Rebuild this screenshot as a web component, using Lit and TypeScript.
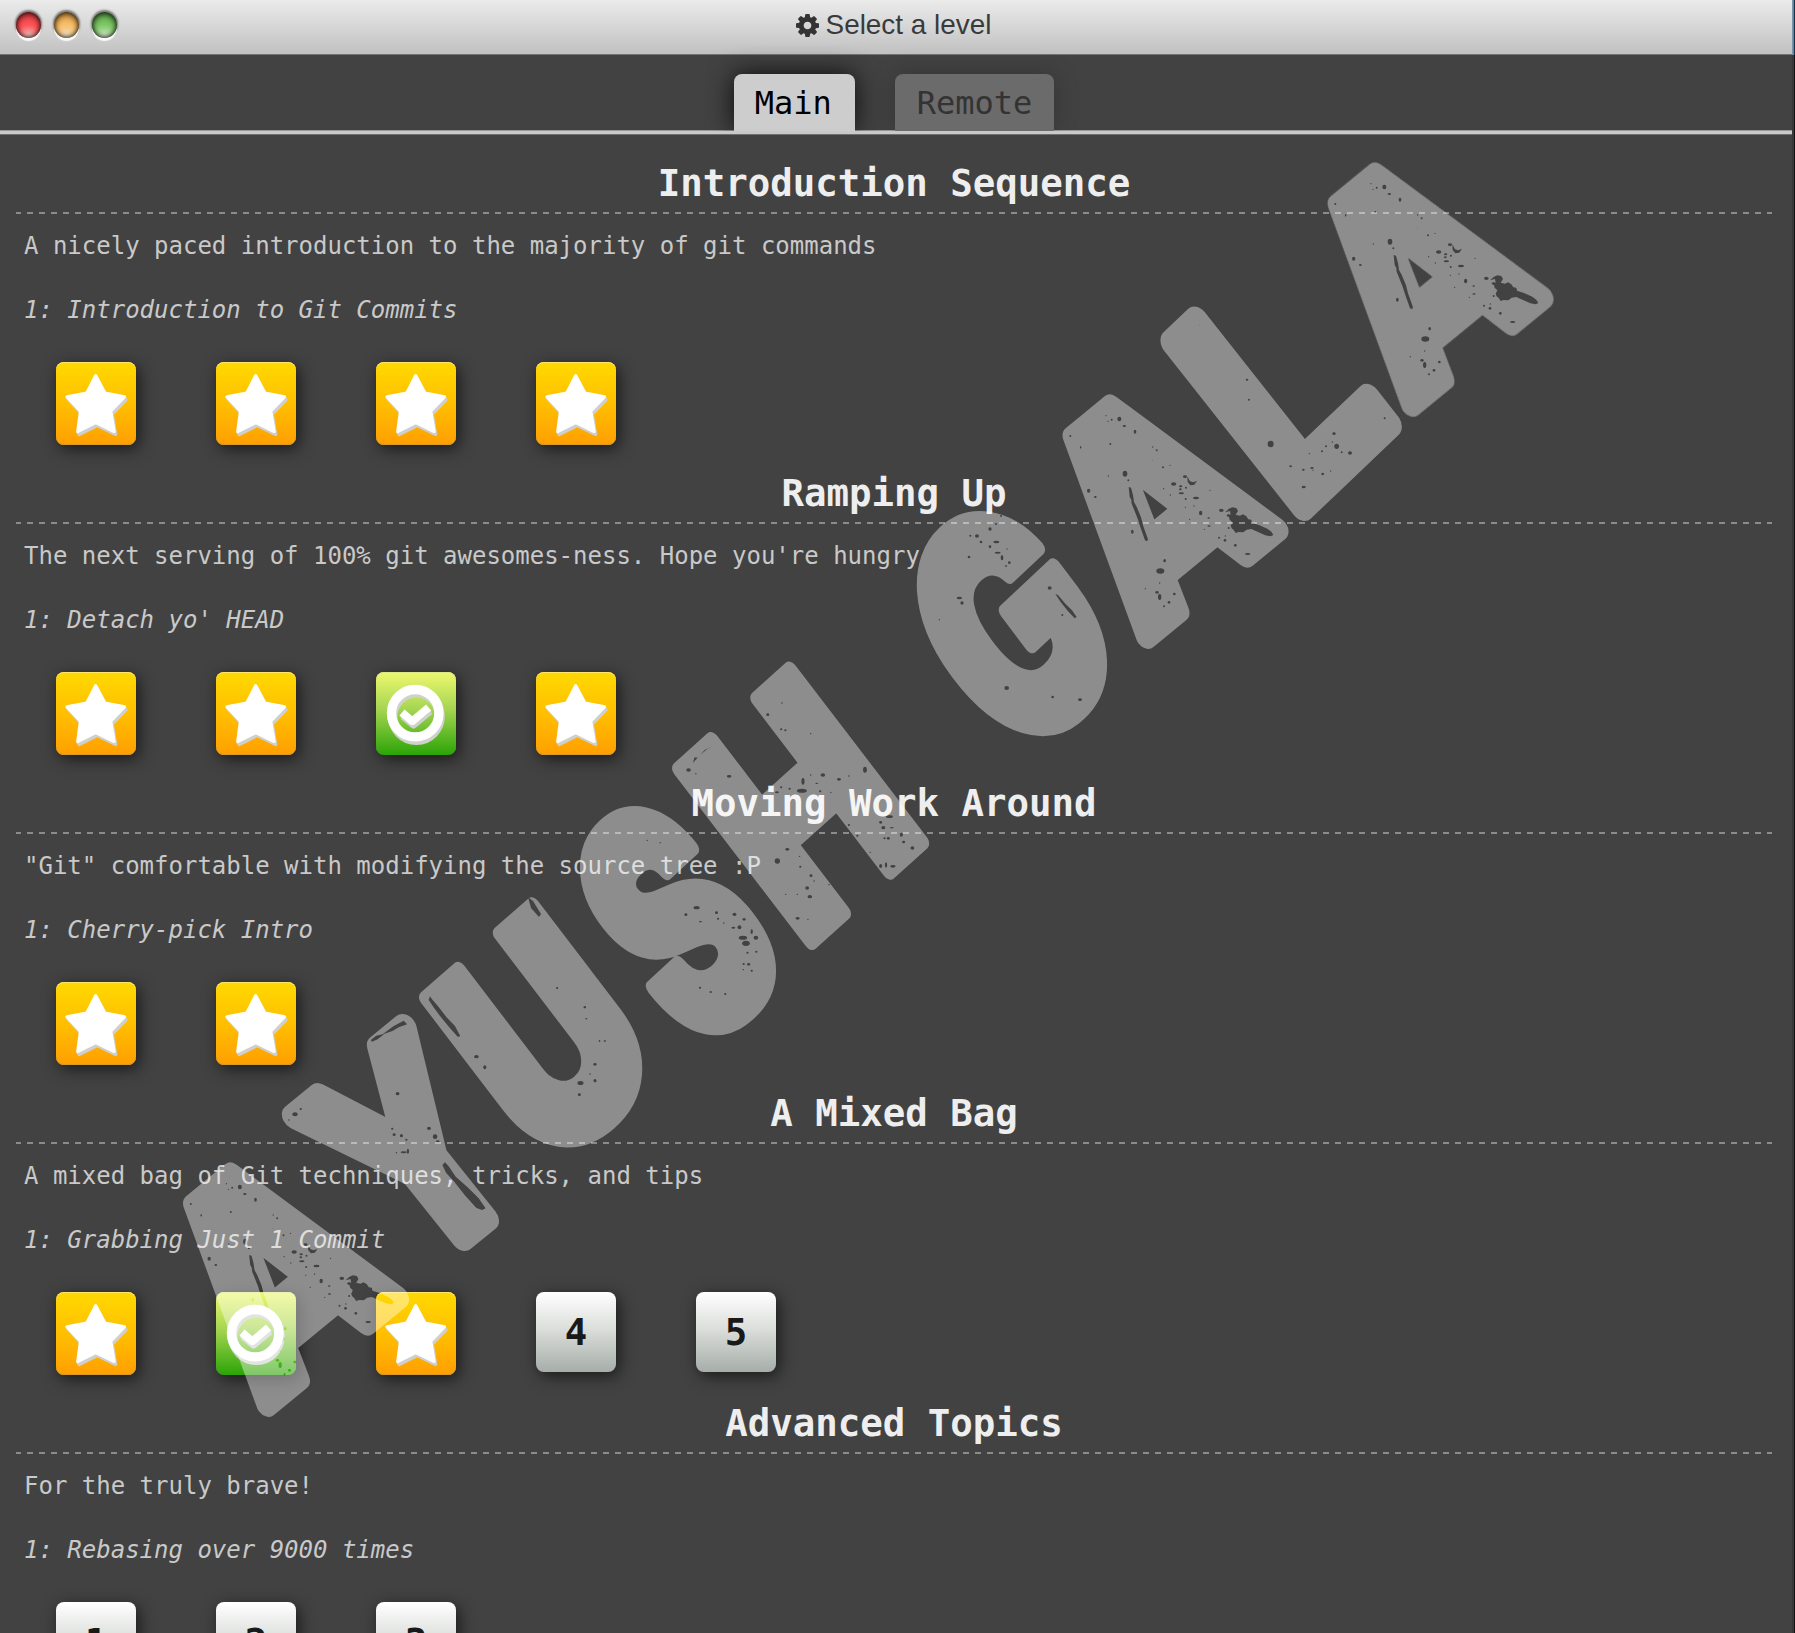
import { LitElement, html, svg, css } from "lit";
import { customElement, property } from "lit/decorators.js";

type Kind = "star" | "check" | "number";

interface Sequence {
  title: string;
  about: string;
  first: string;
  levels: Kind[];
}

const SEQUENCES: Sequence[] = [
  {
    title: "Introduction Sequence",
    about: "A nicely paced introduction to the majority of git commands",
    first: "1: Introduction to Git Commits",
    levels: ["star", "star", "star", "star"],
  },
  {
    title: "Ramping Up",
    about: "The next serving of 100% git awesomes-ness. Hope you're hungry",
    first: "1: Detach yo' HEAD",
    levels: ["star", "star", "check", "star"],
  },
  {
    title: "Moving Work Around",
    about: '"Git" comfortable with modifying the source tree :P',
    first: "1: Cherry-pick Intro",
    levels: ["star", "star"],
  },
  {
    title: "A Mixed Bag",
    about: "A mixed bag of Git techniques, tricks, and tips",
    first: "1: Grabbing Just 1 Commit",
    levels: ["star", "check", "star", "number", "number"],
  },
  {
    title: "Advanced Topics",
    about: "For the truly brave!",
    first: "1: Rebasing over 9000 times",
    levels: ["number", "number", "number"],
  },
];

@customElement("level-tile")
class LevelTile extends LitElement {
  @property() kind: Kind = "number";
  @property({ type: Number }) index = 1;

  static styles = css`
    :host { display: block; width: 80px; flex: none; }
    .tile {
      box-sizing: border-box;
      width: 80px;
      height: 83px;
      border-radius: 8px;
      box-shadow: 3px 4px 16px rgba(0, 0, 0, 0.62);
      overflow: hidden;
    }
    .star {
      background: linear-gradient(#ffd900, #ffbf00 50%, #ff9f00);
      box-shadow: inset 0 1px 0 #ffe566, inset 0 -1px 0 #d99a2a, 3px 4px 16px rgba(0, 0, 0, 0.62);
    }
    .check {
      background: linear-gradient(#eef86e, #a5d552 45%, #2ba406);
      box-shadow: inset 0 1px 0 #d9e880, 3px 4px 16px rgba(0, 0, 0, 0.62);
    }
    .number {
      height: 80px;
      background: linear-gradient(#ffffff, #dcdfdc 45%, #a6aea9);
      color: #191919;
      font: bold 37.4px/44px "DejaVu Sans Mono", monospace;
      padding-top: 18px;
      text-align: center;
    }
    svg { display: block; }
  `;

  render() {
    if (this.kind === "star") {
      const points = "39.7,13.5 48.9,31 68.6,34.8 54.8,49.3 58.2,69.6 39.7,60.6 21.6,69.6 24.4,49.3 10.9,34.8 30.7,31";
      return html`<div class="tile star">
        <svg width="80" height="83" viewBox="0 0 80 83" stroke-width="3" stroke-linejoin="round">
          <polygon points=${points} transform="translate(1.6 3)" fill="#cfcfcf" stroke="#cfcfcf" />
          <polygon points=${points} transform="translate(.6 1.5)" fill="#cfcfcf" stroke="#cfcfcf" />
          <polygon points=${points} fill="#fff" stroke="#fff" />
        </svg>
      </div>`;
    }
    if (this.kind === "check") {
      const mark = (dx: number, dy: number, color: string) => svg`
        <g transform=${`translate(${dx} ${dy})`} fill="none" stroke=${color}>
          <circle cx="39.2" cy="41.2" r="23.7" stroke-width="9.4" />
          <path d="M26 40.5l10.3 8.7L52.6 35.5" stroke-width="7.8" stroke-linejoin="round" />
        </g>`;
      return html`<div class="tile check">
        <svg width="80" height="83" viewBox="0 0 80 83">
          ${mark(1.2, 3.4, "#cfd2cc")} ${mark(0.6, 1.6, "#cfd2cc")} ${mark(0, 0, "#fff")}
        </svg>
      </div>`;
    }
    return html`<div class="tile number">${this.index}</div>`;
  }
}

/* ---------- Stamp lettering laid over the window ---------- */

type Point = [number, number];

interface StampLetter {
  char: string;
  bottomLeft: Point;
  across: Point;
  up: Point;
  font: string;
  weight: number;
  stroke: number;
}

const letter = (font: string, weight: number, stroke: number) =>
  (char: string, bottomLeft: Point, across: Point, up: Point): StampLetter => ({
    char, bottomLeft, across, up, font, weight, stroke,
  });
const heavy = letter("Inter", 900, 14);
const plain = letter('"Liberation Sans"', 700, 24);
const wide = letter('"DejaVu Sans"', 700, 23);
const letterA = (dx: number, dy: number) => wide("A", [1410 + dx, 422 + dy], [150, -123], [-135, -182]);

const STAMP: StampLetter[] = [
  letterA(-1144.5, 1000),
  plain("Y", [419, 1291], [129, -105], [-145, -181]),
  heavy("U", [557, 1181], [119, -104], [-142, -186]),
  heavy("S", [704, 1068], [99, -92], [-158, -203]),
  heavy("H", [811, 953], [121, -109], [-143, -187]),
  heavy("G", [1026, 776], [114, -107], [-148, -196]),
  letterA(-265, 232),
  plain("L", [1302, 527], [107, -102], [-150, -190]),
  letterA(0, 0),
];

const FONT_SIZE = 260;

function placeLetter(l: StampLetter, ctx: CanvasRenderingContext2D) {
  ctx.font = `${l.weight} ${FONT_SIZE}px ${l.font}`;
  const m = ctx.measureText(l.char);
  const pad = l.stroke / 2;
  const left = -m.actualBoundingBoxLeft - pad;
  const right = m.actualBoundingBoxRight + pad;
  const top = m.actualBoundingBoxAscent + pad;
  const bottom = -m.actualBoundingBoxDescent - pad;
  const a = l.across[0] / (right - left);
  const b = l.across[1] / (right - left);
  const c = -l.up[0] / (top - bottom);
  const d = -l.up[1] / (top - bottom);
  const e = l.bottomLeft[0] - a * left + c * bottom;
  const f = l.bottomLeft[1] - b * left + d * bottom;
  return svg`<text transform=${`matrix(${a} ${b} ${c} ${d} ${e} ${f})`} font-family=${l.font}
    font-weight=${l.weight} stroke-width=${l.stroke}>${l.char}</text>`;
}

const specks = (list: number[][]) => list.map(([x, y, rx, ry]) => svg`<ellipse cx=${x} cy=${y} rx=${rx} ry=${ry ?? rx} />`);

const WEAR_A = [
  [703, 141, 6, 7], [680, 143, 3], [669, 148, 2], [663, 131, 2], [718, 162, 5, 3], [750, 179, 4, 6], [556, 192, 3],
  [587, 226, 2, 4], [676, 216, 3], [803, 225, 2], [815, 235, 3], [802, 265, 1], [720, 305, 7, 9], [670, 312, 2],
  [611, 356, 5, 6], [631, 375, 4, 3], [742, 479, 4, 6], [834, 286, 3], [866, 336, 8, 5], [900, 314, 6, 4],
  [889, 364, 8, 3], [902, 381, 3], [933, 378, 9, 4], [947, 423, 5, 7], [914, 442, 2], [927, 402, 2], [887, 343, 5, 3],
  [886, 352, 4, 3], [903, 347, 3], [836, 350, 2], [856, 369, 2], [901, 406, 2], [971, 438, 4, 2], [972, 462, 5, 2],
  [958, 472, 2], [1009, 415, 7, 5], [1031, 468, 3], [1002, 497, 3], [1020, 505, 4], [1021, 492, 2], [1051, 520, 4],
  [1088, 546, 8, 3], [839, 566, 4, 5], [826, 597, 12, 8], [824, 633, 2], [816, 661, 5, 4], [824, 675, 5, 9],
  [868, 666, 4], [852, 691, 4], [837, 703, 3], [781, 650, 2], [855, 280, 2], [975, 355, 2], [730, 325, 3],
];
const WEAR_L = [
  [148, 555, 1], [289, 668, 3], [291, 719, 4, 3], [297, 779, 3], [362, 912, 9, 10], [552, 881, 5, 4], [547, 906, 2],
  [528, 919, 3], [560, 919, 7, 8], [516, 934, 3], [575, 937, 3], [600, 939, 6, 5], [478, 941, 2], [422, 979, 4, 3],
  [460, 989, 4, 3], [486, 984, 5, 3], [489, 991, 2], [518, 1002, 4], [542, 993, 2], [461, 1041, 6, 4], [704, 835, 3],
];
const WEAR_G = [
  [303, 468, 3], [288, 492, 3], [270, 507, 5], [231, 528, 6, 5], [211, 527, 3], [243, 546, 4], [289, 546, 9, 4],
  [270, 560, 4], [207, 591, 4], [293, 578, 9, 3], [306, 593, 4, 8], [321, 567, 2], [328, 608, 4], [318, 618, 4, 2],
  [178, 714, 8, 4], [186, 729, 5], [118, 779, 2], [449, 684, 6, 5], [487, 765, 3], [320, 984, 7, 6], [458, 1011, 4],
  [540, 1019, 6, 4], [318, 688, 3],
];
const WEAR_HS = [
  [580, 189, 2], [543, 224, 4], [578, 268, 3], [589, 271, 3], [655, 281, 2], [336, 390, 6, 5], [355, 401, 2],
  [442, 409, 6, 4], [797, 389, 5, 9], [687, 405, 6, 5], [729, 418, 5, 4], [755, 408, 2], [635, 424, 4, 10],
  [632, 452, 13, 6], [655, 405, 2], [671, 430, 4, 2], [600, 446, 3], [578, 442, 3], [567, 457, 5, 3], [680, 454, 3],
  [708, 457, 2], [861, 530, 9, 4], [838, 547, 4], [845, 563, 5], [867, 563, 5, 2], [755, 555, 3], [777, 587, 3],
  [892, 584, 4, 6], [858, 595, 4], [848, 595, 3], [898, 606, 4], [921, 624, 5], [811, 637, 2], [838, 678, 4, 6],
  [852, 675, 3, 8], [870, 679, 7, 4], [594, 628, 5, 4], [568, 663, 7, 8], [626, 649, 2], [628, 680, 3], [656, 707, 4],
  [664, 723, 2], [646, 744, 5], [653, 770, 6, 5], [620, 763, 2], [590, 763, 2], [621, 835, 5, 4], [648, 838, 2],
  [703, 734, 2], [228, 601, 2], [262, 608, 2], [357, 803, 8, 5], [329, 824, 4], [367, 845, 4, 2], [409, 818, 4],
  [413, 836, 3], [456, 823, 5], [481, 838, 4], [428, 849, 2], [453, 863, 5, 3], [469, 862, 5, 6], [478, 893, 11, 6],
  [486, 910, 10, 8], [501, 875, 3, 7], [512, 893, 6], [490, 938, 3], [513, 935, 3], [480, 972, 3], [493, 973, 4],
  [479, 989, 2], [501, 992, 3], [366, 1043, 3], [394, 1056, 3], [432, 1062, 3], [65, 1102, 3], [69, 1136, 2],
  [103, 1203, 2], [118, 1203, 2], [91, 1273, 3],
];
const WEAR_YU = [
  [379, 403, 7, 6], [394, 387, 3], [363, 420, 2], [647, 341, 5], [633, 446, 3], [638, 464, 4], [657, 467, 4, 5],
  [670, 479, 3], [729, 445, 5], [745, 470, 6, 7], [752, 484, 5, 3], [663, 517, 8, 3], [674, 514, 3, 8], [644, 518, 2],
  [853, 230, 6, 5], [875, 262, 4, 6], [1064, 24, 3], [1136, 82, 3], [1140, 116, 2], [1175, 183, 2], [1188, 183, 2],
  [1163, 253, 4], [1150, 282, 2], [1163, 302, 4, 5], [1125, 309, 8, 6], [1122, 344, 4],
];

const scarA = svg`
  ${specks(WEAR_A)}
  <path d="M731 345l7 2 6 22 3 21 8 14 13 32 6 24 15 42-3 6-6-3-14-40-8-25-8-20-10-25-1-11-5-10z" />
  <path d="M1020 421l12-11 10-4 12 2 5 9-7 11 13 3 9-4 10 6 6 9 9 1 2 9 21 7 25 11 12 9 6 10-8 4-16-3-22-10-20-9-14 2-10 8-14-1-9 3-6-9-6-5-3-8 5-10-8-8-2-8-8-3 5-6 8 2-2-11z" />
  <path d="M907 313l8 15 10 3 11-5-8 12-12 2-8-10z" />`;

@customElement("stamp-overlay")
class StampOverlay extends LitElement {
  static styles = css`
    :host { display: block; }
    svg { display: block; }
    .letters { fill: #fff; stroke: #fff; stroke-linejoin: round; font-size: 260px; }
  `;

  render() {
    const ctx = document.createElement("canvas").getContext("2d")!;
    return html`<svg width="1795" height="1633" viewBox="0 0 1795 1633">
      <defs>
        <mask id="wear" maskUnits="userSpaceOnUse" x="0" y="0" width="1795" height="1633">
          <rect width="1795" height="1633" fill="#fff" />
          <g transform="translate(1150 140) scale(.33333)">${scarA}${specks(WEAR_L)}</g>
          <g transform="translate(885 372) scale(.33333)">${scarA}</g>
          <g transform="translate(5.5 1140) scale(.33333)">${scarA}</g>
          <g transform="translate(900 360) scale(.33333)">
            ${specks(WEAR_G)}
            <path d="M466 702l8 3 22 26 20 20 14 20-6 4-20-21-22-28z" />
          </g>
          <g transform="translate(560 640) scale(.38265 .33333)">
            ${specks(WEAR_HS)}
            <path d="M402 317l-18 11-17 16-20 25 5-17 8 1 18-23z" />
          </g>
          <g transform="translate(150 980) scale(.38265 .33333)">
            ${specks(WEAR_YU)}
            <path d="M732 49l5 9 18 24 20 30 22 26 14 31-7 1-22-28-24-34-16-25-14-24z" />
            <path d="M577 180l14-13 17-4 28-24 27-17 9 11-22 9-15 10-22 9-18 17-15 7z" />
            <path d="M771 547l9 11 19 32 31 32 29 33 18 30-9 5-15-6-29-37-30-43-20-25-10-24z" />
          </g>
          <path d="M528 897l5 4 8 13-2 3-8-9z" />
        </mask>
      </defs>
      <g opacity=".4" mask="url(#wear)">
        <g class="letters">${STAMP.map((l) => placeLetter(l, ctx))}</g>
      </g>
    </svg>`;
  }
}

@customElement("app-root")
class AppRoot extends LitElement {
  static styles = css`
    :host {
      display: block;
      position: relative;
      width: 1795px;
      height: 1633px;
      overflow: hidden;
      background: #424242;
      font-family: "DejaVu Sans Mono", monospace;
    }
    .screen { display: grid; grid-template-columns: 1792px 3px; height: 1633px; }
    .edge { background: linear-gradient(90deg, #383838 2px, #141414 2px); }
    .edge-top { height: 55px; background: linear-gradient(90deg, #7595b0 1px, #5d83a0 1px 2px, #1d3649 2px); }
    .window { min-width: 0; }
    .titlebar {
      box-sizing: border-box;
      height: 55px;
      display: grid;
      grid-template-columns: 160px 1fr 165px;
      border-bottom: 1px solid #747474;
      background: linear-gradient(#ebebeb, #c1c1c1);
    }
    .lights { display: flex; gap: 13px; padding: 12px 0 0 16px; }
    .light {
      width: 25px;
      height: 26px;
      border-radius: 50%;
      box-shadow: 0 3px 1px #fafafa, 0 -1px 2px 1px rgba(50, 50, 50, 0.6),
        inset 0 2px 6px rgba(0, 0, 0, 0.75), inset 0 -1px 4px rgba(0, 0, 0, 0.6);
    }
    .red { background: radial-gradient(circle at 50% 100%, #f0b4b4 10%, #fc5457 45%, #e63a3e); }
    .amber { background: radial-gradient(circle at 50% 100%, #f0dcba 10%, #f8bf6c 45%, #dd9c3e); }
    .green { background: radial-gradient(circle at 50% 100%, #c8e0bf 10%, #7fc968 45%, #56a243); }
    .title {
      display: flex;
      justify-content: center;
      align-items: center;
      gap: 7px;
      padding-bottom: 4px;
      color: #3a3a3a;
      font: 27.9px/32px "Liberation Sans", Arial, sans-serif;
    }
    .gear { width: 23px; height: 23px; fill: #333; }
    .tabs {
      box-sizing: border-box;
      height: 79px;
      display: flex;
      justify-content: center;
      align-items: flex-end;
      gap: 40px;
      padding-right: 4px;
      border-bottom: 3px solid #c9c9c9;
      box-shadow: inset 0 -1px 0 #999, 0 1px 0 #707070;
    }
    .tab {
      box-sizing: border-box;
      height: 57px;
      padding: 11px 23px 0 21px;
      border-radius: 8px 8px 0 0;
      font-size: 32px;
      line-height: 37px;
      clip-path: inset(-30px -30px 0 -30px);
    }
    .main { background: #cdcdcd; color: #000; box-shadow: 0 0 26px rgba(0, 0, 0, 0.85); }
    .remote { padding: 11px 22px 0; background: #6b6b6b; color: #333; box-shadow: 0 0 26px rgba(0, 0, 0, 0.22); }
    .list { padding: 18px 20px 0 16px; }
    .sequence { display: flex; flex-direction: column; height: 310px; }
    .heading {
      margin: 0;
      height: 60px;
      color: #eee;
      font-size: 37.4px;
      line-height: 62px;
      text-align: center;
    }
    .rule {
      height: 2px;
      background: repeating-linear-gradient(90deg, #8b8b8b 0 5.3px, transparent 5.3px 11.3px, #8b8b8b 11.3px 12px);
    }
    .about, .first { margin: 0; padding-left: 8px; color: #c9c9c9; font-size: 24px; line-height: 28px; white-space: pre; }
    .about { margin-top: 18px; }
    .first { margin-top: 36px; font-style: italic; }
    .levels { display: flex; gap: 80px; padding: 38px 0 0 40px; }
    .stamp { position: absolute; inset: 0; pointer-events: none; }
  `;

  render() {
    return html`
      <div class="screen">
        <div class="window">
          <header class="titlebar">
            <div class="lights">
              <span class="light red"></span><span class="light amber"></span><span class="light green"></span>
            </div>
            <div class="title">
              <svg class="gear" viewBox="0 128 1536 1536">
                <path d="M1024 896q0-106-75-181t-181-75-181 75-75 181 75 181 181 75 181-75 75-181zm512-109v222q0 12-8 23t-20 13l-185 28q-19 54-39 91 35 50 107 138 10 12 10 25t-9 23q-27 37-99 108t-94 71q-12 0-26-9l-138-108q-44 23-91 38-16 136-29 186-7 28-36 28h-222q-14 0-24.5-8.5t-11.5-21.5l-28-184q-49-16-90-37l-141 107q-10 9-25 9-14 0-25-11-126-114-165-168-7-10-7-23 0-12 8-23 15-21 51-66.5t54-70.5q-27-50-41-99l-183-27q-13-2-21-12.5t-8-23.5v-222q0-12 8-23t19-13l186-28q14-46 39-92-40-57-107-138-10-12-10-24 0-10 9-23 26-36 98.5-107.5t94.5-71.5q13 0 26 10l138 107q44-23 91-38 16-136 29-186 7-28 36-28h222q14 0 24.5 8.5t11.5 21.5l28 184q49 16 90 37l142-107q9-9 24-9 13 0 25 10 129 119 165 170 7 8 7 22 0 12-8 23-15 21-51 66.5t-54 70.5q26 50 41 98l183 28q13 2 21 12.5t8 23.5z" />
              </svg>
              <span>Select a level</span>
            </div>
          </header>
          <nav class="tabs">
            <div class="tab main">Main</div>
            <div class="tab remote">Remote</div>
          </nav>
          <main class="list">
            ${SEQUENCES.map(
              (s) => html`<section class="sequence">
                <h2 class="heading">${s.title}</h2>
                <div class="rule"></div>
                <p class="about">${s.about}</p>
                <p class="first">${s.first}</p>
                <div class="levels">
                  ${s.levels.map((k, i) => html`<level-tile .kind=${k} .index=${i + 1}></level-tile>`)}
                </div>
              </section>`
            )}
          </main>
        </div>
        <div class="edge"><div class="edge-top"></div></div>
      </div>
      <stamp-overlay class="stamp"></stamp-overlay>
    `;
  }
}
